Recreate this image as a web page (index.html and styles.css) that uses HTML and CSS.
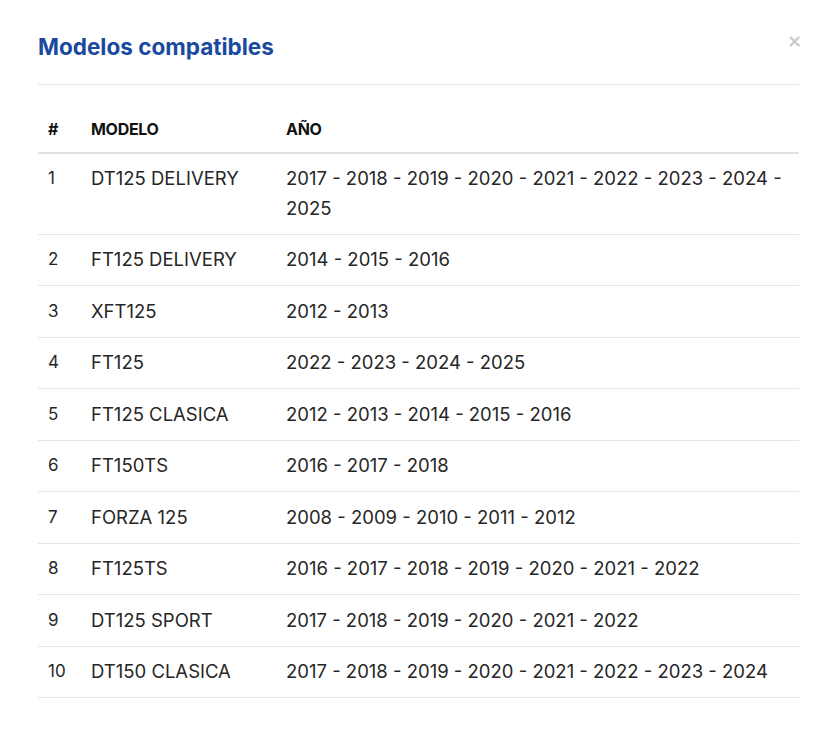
FILE: index.html
```html
<!DOCTYPE html>
<html lang="es">
<head>
<meta charset="utf-8">
<title>Modelos compatibles</title>
<link rel="stylesheet" href="styles.css">
</head>
<body>
<div class="modal">
  <div class="modal-header">
    <h2 class="modal-title">Modelos compatibles</h2>
    <button class="close" aria-label="Cerrar">×</button>
  </div>
  <table class="models">
    <thead>
      <tr><th class="num">#</th><th class="model">MODELO</th><th>AÑO</th></tr>
    </thead>
    <tbody>
      <tr><td class="num">1</td><td class="model">DT125 DELIVERY</td><td>2017 - 2018 - 2019 - 2020 - 2021 - 2022 - 2023 - 2024 - 2025</td></tr>
      <tr><td class="num">2</td><td class="model">FT125 DELIVERY</td><td>2014 - 2015 - 2016</td></tr>
      <tr><td class="num">3</td><td class="model">XFT125</td><td>2012 - 2013</td></tr>
      <tr><td class="num">4</td><td class="model">FT125</td><td>2022 - 2023 - 2024 - 2025</td></tr>
      <tr><td class="num">5</td><td class="model">FT125 CLASICA</td><td>2012 - 2013 - 2014 - 2015 - 2016</td></tr>
      <tr><td class="num">6</td><td class="model">FT150TS</td><td>2016 - 2017 - 2018</td></tr>
      <tr><td class="num">7</td><td class="model">FORZA 125</td><td>2008 - 2009 - 2010 - 2011 - 2012</td></tr>
      <tr><td class="num">8</td><td class="model">FT125TS</td><td>2016 - 2017 - 2018 - 2019 - 2020 - 2021 - 2022</td></tr>
      <tr><td class="num">9</td><td class="model">DT125 SPORT</td><td>2017 - 2018 - 2019 - 2020 - 2021 - 2022</td></tr>
      <tr><td class="num">10</td><td class="model">DT150 CLASICA</td><td>2017 - 2018 - 2019 - 2020 - 2021 - 2022 - 2023 - 2024</td></tr>
    </tbody>
  </table>
</div>
</body>
</html>
```
FILE: styles.css
```css
html, body {
  margin: 0;
  padding: 0;
  background: #fff;
}
body {
  font-family: Inter, "Liberation Sans", sans-serif;
  color: #262626;
}
.modal {
  width: 761px;
  margin-left: 38px;
}
.modal-header {
  position: relative;
  padding: 33px 0 24px;
  border-bottom: 1px solid #e6e6e6;
}
.modal-title {
  margin: 0;
  font-size: 22.5px;
  line-height: 27px;
  font-weight: 700;
  color: #1a4a9f;
}
.close {
  position: absolute;
  right: -3px;
  top: 31px;
  border: 0;
  background: none;
  padding: 0;
  font-family: "DejaVu Sans", sans-serif;
  font-size: 18px;
  line-height: 20px;
  color: #c9c9c9;
  font-weight: 700;
}
.models {
  width: 100%;
  margin-top: 20px;
  border-collapse: collapse;
}
.models th {
  text-align: left;
  font-size: 16px;
  line-height: 22px;
  font-weight: 700;
  color: #111;
  padding: 12.5px 10px 12px;
  border-bottom: 2px solid #e2e2e2;
  letter-spacing: -0.3px;
}
.models td {
  font-size: 18.5px;
  line-height: 29.5px;
  padding: 10.5px 10px;
  border-bottom: 1px solid #e6e6e6;
  vertical-align: top;
  color: #262626;
}
.models .num {
  width: 23px;
}
.models td.num {
  font-size: 17px;
  line-height: 28px;
}
.models .model {
  width: 175px;
}
```
